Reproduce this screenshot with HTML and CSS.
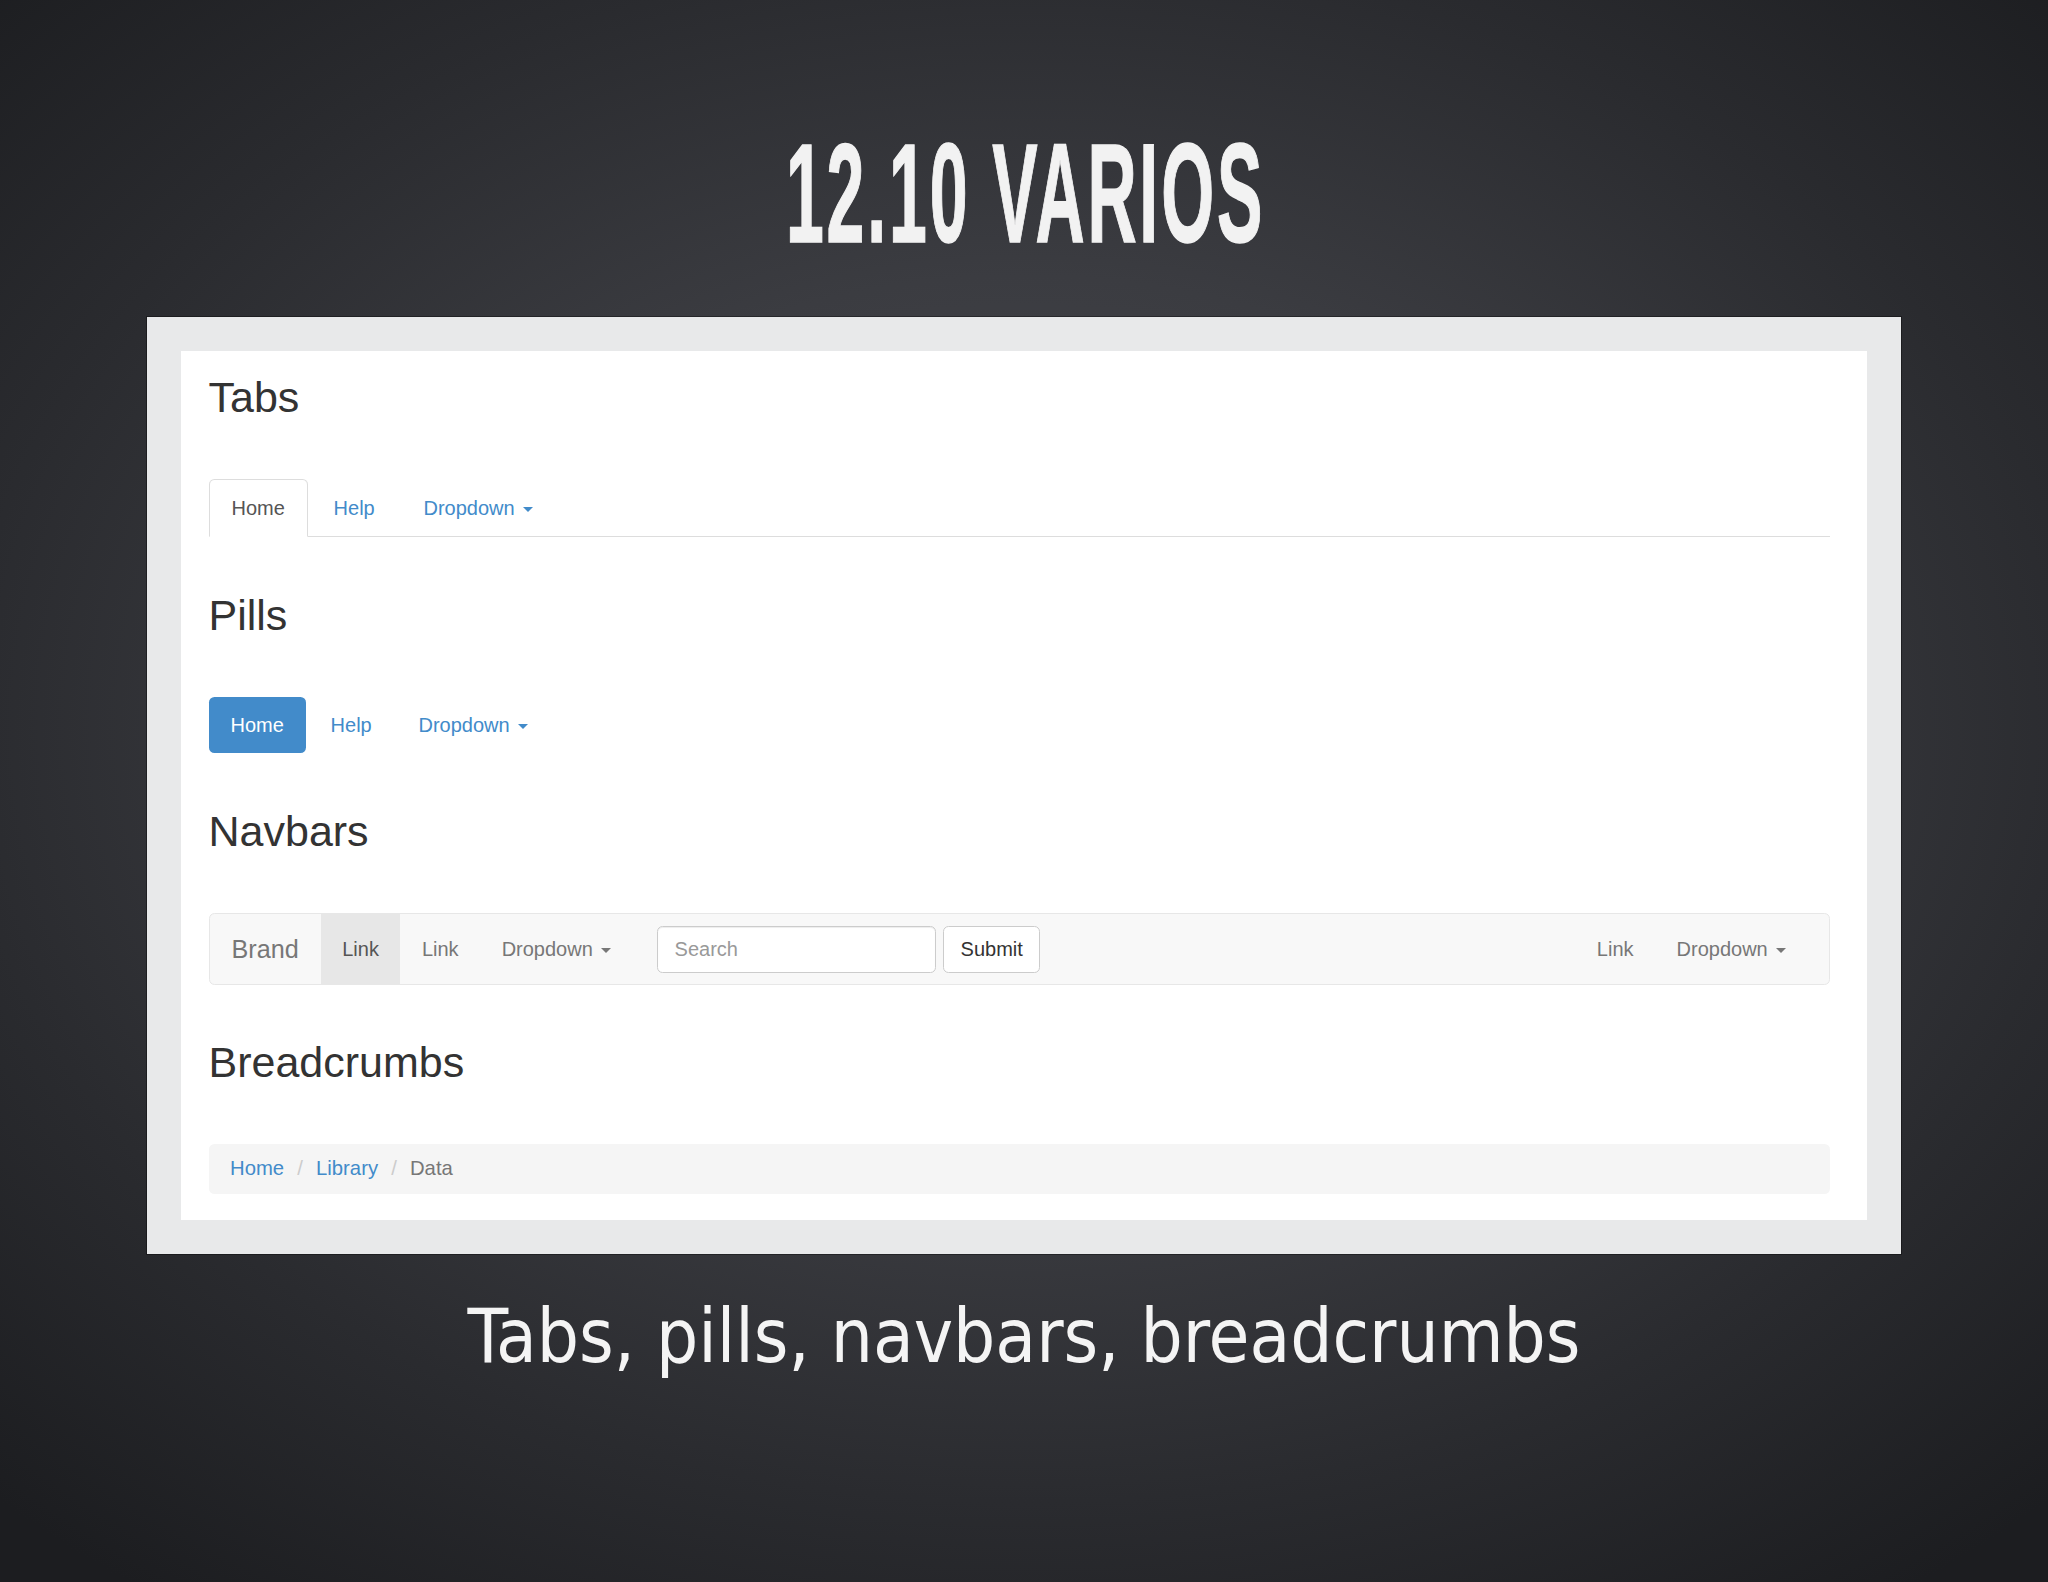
FILE: index.html
```html
<!DOCTYPE html>
<html lang="es">
<head>
<meta charset="utf-8">
<title>12.10 Varios</title>
<link rel="stylesheet" href="styles.css">
</head>
<body>
<main class="slide">
  <h1 class="slide-title">12.10 VARIOS</h1>
  <div class="frame">
    <div class="sheet">
      <section class="demo">
        <h2 class="demo-heading">Tabs</h2>
        <ul class="tabs">
          <li class="tab active"><a href="#">Home</a></li>
          <li class="tab"><a href="#">Help</a></li>
          <li class="tab"><a href="#">Dropdown <span class="caret"></span></a></li>
        </ul>
      </section>

      <section class="demo demo-pills">
        <h2 class="demo-heading">Pills</h2>
        <ul class="pills">
          <li class="pill active"><a href="#">Home</a></li>
          <li class="pill"><a href="#">Help</a></li>
          <li class="pill"><a href="#">Dropdown <span class="caret"></span></a></li>
        </ul>
      </section>

      <section class="demo demo-navbar">
        <h2 class="demo-heading">Navbars</h2>
        <nav class="navbar">
          <a class="navbar-brand" href="#">Brand</a>
          <ul class="navbar-nav">
            <li class="active"><a href="#">Link</a></li>
            <li><a href="#">Link</a></li>
            <li><a href="#">Dropdown <span class="caret"></span></a></li>
          </ul>
          <form class="navbar-form">
            <input class="form-control" type="text" placeholder="Search">
            <button class="btn" type="button">Submit</button>
          </form>
          <ul class="navbar-nav navbar-right">
            <li><a href="#">Link</a></li>
            <li><a href="#">Dropdown <span class="caret"></span></a></li>
          </ul>
        </nav>
      </section>

      <section class="demo demo-crumbs">
        <h2 class="demo-heading">Breadcrumbs</h2>
        <ol class="breadcrumb">
          <li><a href="#">Home</a></li>
          <li><a href="#">Library</a></li>
          <li class="current">Data</li>
        </ol>
      </section>
    </div>
  </div>
  <p class="caption">Tabs, pills, navbars, breadcrumbs</p>
</main>
</body>
</html>
```

FILE: styles.css
```css
* {
  box-sizing: border-box;
}

html,
body {
  margin: 0;
  padding: 0;
}

body {
  min-height: 1582px;
  background: radial-gradient(ellipse 72% 68% at 50% 46%, #4a4b51 0%, #3b3c41 42%, #2a2b2f 72%, #1c1d20 100%);
  font-family: "Liberation Sans", Arial, sans-serif;
  color: #333;
}

.slide {
  display: flex;
  flex-direction: column;
  align-items: center;
  padding-top: 123px;
}

.slide-title {
  margin: 0;
  padding-left: 6px;
  font-family: "Liberation Sans", Arial, sans-serif;
  font-weight: 700;
  font-size: 141px;
  line-height: 141px;
  letter-spacing: 6px;
  color: #f2f2f2;
  white-space: nowrap;
  transform: scaleX(0.482);
  -webkit-text-stroke: 1.5px #f2f2f2;
}

.frame {
  width: 1754px;
  margin-top: 53px;
  padding: 34px;
  background: #e8e9ea;
  box-shadow: 0 0 0 1px rgba(0, 0, 0, 0.35);
}

.sheet {
  background: #fff;
  padding: 23px 37px 26px 27.5px;
}

.demo-pills {
  margin-top: 55px;
}

.demo-navbar {
  margin-top: 55px;
}

.demo-crumbs {
  margin-top: 54px;
}

.demo-heading {
  margin: 0 0 58px;
  font-size: 43px;
  line-height: 47px;
  font-weight: 400;
  color: #333;
}

a {
  text-decoration: none;
  color: #428bca;
}

ul,
ol {
  list-style: none;
  margin: 0;
  padding: 0;
}

.caret {
  display: inline-block;
  width: 0;
  height: 0;
  margin-left: 2.75px;
  vertical-align: middle;
  border-top: 5.5px solid;
  border-left: 5.5px solid transparent;
  border-right: 5.5px solid transparent;
}

/* Tabs */
.tabs {
  display: flex;
  border-bottom: 1px solid #ddd;
  font-size: 20px;
}

.tab {
  margin-bottom: -1px;
  margin-right: 2.75px;
}

.tab a {
  display: block;
  padding: 14px 22px;
  line-height: 28px;
  border: 1px solid transparent;
  border-radius: 5.5px 5.5px 0 0;
}

.tab.active a {
  color: #555;
  background: #fff;
  border-color: #ddd #ddd transparent;
}

/* Pills */
.pills {
  display: flex;
  margin-top: 2px;
  font-size: 20px;
}

.pill {
  margin-right: 2.75px;
}

.pill a {
  display: block;
  padding: 14px 22px;
  line-height: 28px;
  border-radius: 5.5px;
}

.pill.active a {
  color: #fff;
  background: #428bca;
}

/* Navbar */
.navbar {
  display: flex;
  align-items: center;
  background: #f8f8f8;
  border: 1px solid #e7e7e7;
  border-radius: 5.5px;
  font-size: 20px;
}

.navbar-brand {
  padding: 21px 22px;
  font-size: 25.2px;
  line-height: 28px;
  color: #777;
}

.navbar-nav {
  display: flex;
}

.navbar-nav a {
  display: block;
  padding: 21px 21.5px;
  line-height: 28px;
  color: #777;
}

.navbar-nav .active a {
  color: #555;
  background: #e7e7e7;
}

.navbar-form {
  display: flex;
  margin: 0 0 0 24.5px;
}

.form-control {
  width: 279px;
  height: 47px;
  padding: 8px 16.5px;
  font-family: "Liberation Sans", Arial, sans-serif;
  font-size: 20px;
  color: #555;
  background: #fff;
  border: 1px solid #ccc;
  border-radius: 5.5px;
  box-shadow: inset 0 1px 1px rgba(0, 0, 0, 0.075);
}

.form-control::placeholder {
  color: #999;
}

.btn {
  height: 47px;
  margin-left: 7px;
  padding: 8px 16.5px;
  font-family: "Liberation Sans", Arial, sans-serif;
  font-size: 20px;
  color: #333;
  background: #fff;
  border: 1px solid #ccc;
  border-radius: 5.5px;
}

.navbar-right {
  margin-left: auto;
  margin-right: 21.5px;
}

/* Breadcrumb */
.breadcrumb {
  margin-top: 6.5px;
  padding: 11px 21.5px;
  line-height: 27.5px;
  font-size: 20.3px;
  background: #f5f5f5;
  border-radius: 5.5px;
}

.breadcrumb li {
  display: inline-block;
}

.breadcrumb li + li::before {
  content: "/\00a0";
  padding: 0 7.5px;
  color: #ccc;
}

.breadcrumb .current {
  color: #777;
}

/* Caption */
.caption {
  margin: 40.7px 0 0;
  font-family: "DejaVu Sans Condensed", "DejaVu Sans", sans-serif;
  font-stretch: condensed;
  font-size: 74px;
  line-height: 84px;
  color: #f4f4f4;
  white-space: nowrap;
}
```
